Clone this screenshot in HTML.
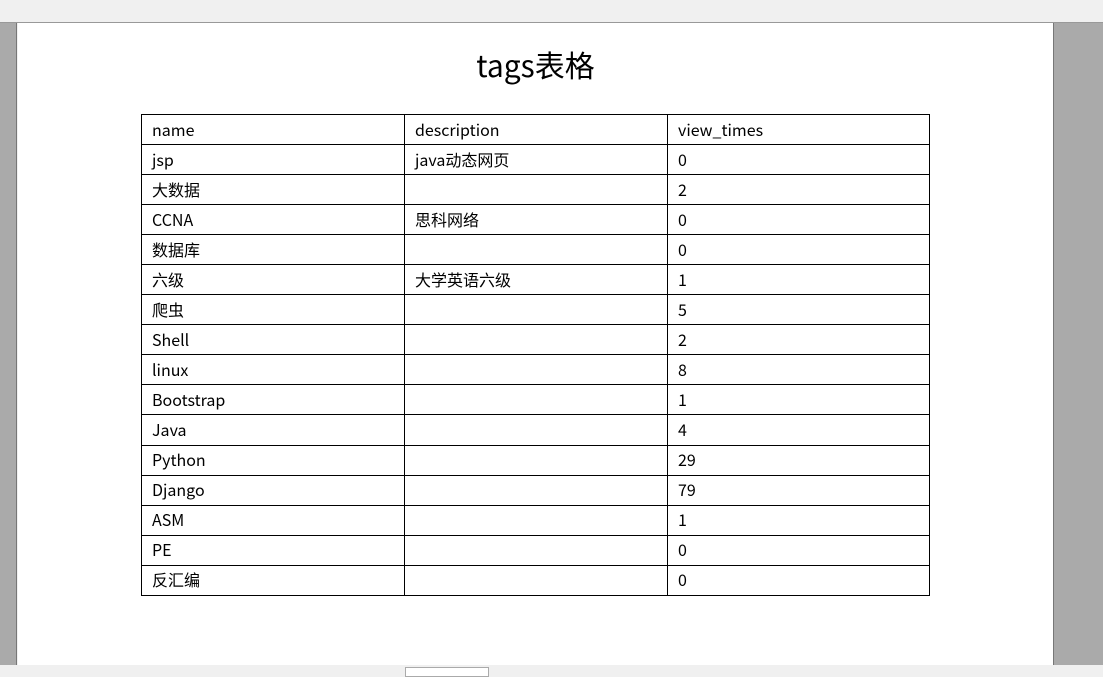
<!DOCTYPE html>
<html><head><meta charset="utf-8"><style>
*{margin:0;padding:0;box-sizing:border-box}
body{width:1103px;height:673px;background:#f0f0f0;position:relative;overflow:hidden;font-family:"Noto Sans CJK SC",sans-serif;color:#000}
.l{position:absolute;left:0;top:23px;width:17px;height:642px;background:#aaa;border-right:1px solid #777}
.r{position:absolute;left:1053px;top:23px;width:50px;height:642px;background:#aaa;border-left:1px solid #777}
.top{position:absolute;left:0;top:22px;width:1103px;height:1px;background:#999}
.page{position:absolute;left:18px;top:23px;width:1035px;height:642px;background:#fff}
h1{position:absolute;left:0;width:100%;top:19px;text-align:center;font-size:30px;font-weight:normal;line-height:44px}
table{position:absolute;left:123px;top:91px;width:789px;border-collapse:collapse}
td{border:1px solid #000;height:30.06px;padding:0 0 2px 10px;font-size:16px;line-height:20px;vertical-align:middle}
td:nth-child(1){width:263px}td:nth-child(2){width:263px}
.box{position:absolute;left:405px;top:667px;width:84px;height:10px;background:#fff;border:1px solid #aaa}
</style></head><body>
<div class="top"></div><div class="l"></div><div class="r"></div>
<div class="page"><h1>tags表格</h1>
<table>
<tr><td>name</td><td>description</td><td>view_times</td></tr>
<tr><td>jsp</td><td>java动态网页</td><td>0</td></tr>
<tr><td>大数据</td><td></td><td>2</td></tr>
<tr><td>CCNA</td><td>思科网络</td><td>0</td></tr>
<tr><td>数据库</td><td></td><td>0</td></tr>
<tr><td>六级</td><td>大学英语六级</td><td>1</td></tr>
<tr><td>爬虫</td><td></td><td>5</td></tr>
<tr><td>Shell</td><td></td><td>2</td></tr>
<tr><td>linux</td><td></td><td>8</td></tr>
<tr><td>Bootstrap</td><td></td><td>1</td></tr>
<tr><td>Java</td><td></td><td>4</td></tr>
<tr><td>Python</td><td></td><td>29</td></tr>
<tr><td>Django</td><td></td><td>79</td></tr>
<tr><td>ASM</td><td></td><td>1</td></tr>
<tr><td>PE</td><td></td><td>0</td></tr>
<tr><td>反汇编</td><td></td><td>0</td></tr>
</table></div>
<div class="box"></div>
</body></html>
